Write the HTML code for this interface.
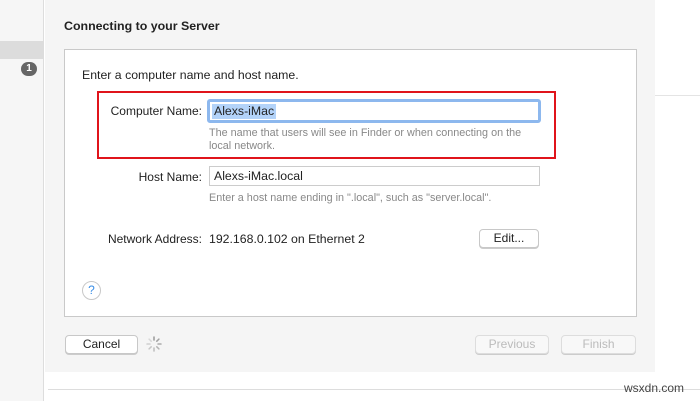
<!DOCTYPE html>
<html><head><meta charset="utf-8"><style>
*{margin:0;padding:0;box-sizing:border-box}
body{width:700px;height:401px;position:relative;overflow:hidden;background:#fff;font-family:"Liberation Sans",sans-serif;color:#222}
.a{position:absolute}
.lbl{font-size:12px;text-align:right;width:140px;left:62px}
.help{font-size:10.8px;color:#888;left:209px;line-height:13px}
.btn{background:#fff;border:1px solid #c8c8c8;border-radius:4px;font-size:12px;text-align:center;box-shadow:0 1px 0 #ccc}
</style></head><body>
<div class="a" style="left:0;top:0;width:44px;height:401px;background:#f6f6f6;border-right:1px solid #ddd"></div>
<div class="a" style="left:0;top:41px;width:44px;height:18px;background:#dcdcdc"></div>
<div class="a" style="left:21px;top:62px;width:16px;height:14px;border-radius:7px;background:#666;color:#fff;font-size:10px;font-weight:bold;text-align:center;line-height:14px">1</div>
<div class="a" style="left:45px;top:0;width:610px;height:372px;background:#f5f5f5"></div>
<div class="a" style="left:655px;top:95px;width:45px;height:1px;background:#e4e4e4"></div>
<div class="a" style="left:48px;top:389px;width:652px;height:1px;background:#ddd"></div>
<div class="a" style="left:64px;top:19px;font-size:12.4px;font-weight:bold">Connecting to your Server</div>
<div class="a" style="left:64px;top:49px;width:573px;height:268px;background:#fff;border:1px solid #c9c9c9"></div>
<div class="a" style="left:82px;top:68px;font-size:12.3px">Enter a computer name and host name.</div>
<div class="a" style="left:97px;top:91px;width:459px;height:68px;border:2px solid #e0141b"></div>
<div class="a lbl" style="top:104px">Computer Name:</div>
<div class="a" style="left:207px;top:99px;width:334px;height:24px;border:3px solid #8db8ee;border-radius:3px;background:#fff"></div>
<div class="a" style="left:212px;top:104px;height:15px;padding:0 2px;background:#b3d3f9;font-size:12.3px;line-height:15px">Alexs-iMac</div>
<div class="a help" style="top:127px">The name that users will see in Finder or when connecting on the<br>local network.</div>
<div class="a lbl" style="top:170px">Host Name:</div>
<div class="a" style="left:209px;top:166px;width:331px;height:20px;border:1px solid #ccc;background:#fff;font-size:12.3px;line-height:18px;padding-left:4px">Alexs-iMac.local</div>
<div class="a help" style="top:192px">Enter a host name ending in ".local", such as "server.local".</div>
<div class="a lbl" style="top:232px">Network Address:</div>
<div class="a" style="left:209px;top:232px;font-size:12.3px">192.168.0.102 on Ethernet 2</div>
<div class="a btn" style="left:479px;top:229px;width:60px;height:19px;line-height:17px">Edit...</div>
<div class="a" style="left:82px;top:281px;width:19px;height:19px;border-radius:50%;border:1px solid #c8c8c8;color:#3a8ee6;font-size:12px;text-align:center;line-height:17px;background:#fff">?</div>
<div class="a btn" style="left:65px;top:335px;width:73px;height:19px;line-height:17px">Cancel</div>
<svg class="a" style="left:146px;top:336px" width="16" height="16" viewBox="0 0 16 16"><g stroke="#999" stroke-width="1.5" stroke-linecap="round"><line x1="8" y1="1" x2="8" y2="4"/><line x1="12.9" y1="3.1" x2="10.8" y2="5.2" opacity=".9"/><line x1="15" y1="8" x2="12" y2="8" opacity=".8"/><line x1="12.9" y1="12.9" x2="10.8" y2="10.8" opacity=".7"/><line x1="8" y1="15" x2="8" y2="12" opacity=".6"/><line x1="3.1" y1="12.9" x2="5.2" y2="10.8" opacity=".5"/><line x1="1" y1="8" x2="4" y2="8" opacity=".4"/><line x1="3.1" y1="3.1" x2="5.2" y2="5.2" opacity=".3"/></g></svg>
<div class="a btn" style="left:475px;top:335px;width:74px;height:19px;line-height:17px;color:#bbb;background:#f8f8f8;border-color:#ddd">Previous</div>
<div class="a btn" style="left:561px;top:335px;width:75px;height:19px;line-height:17px;color:#bbb;background:#f8f8f8;border-color:#ddd">Finish</div>
<div class="a" style="left:624px;top:381px;font-size:12px;color:#444">wsxdn.com</div>
</body></html>
